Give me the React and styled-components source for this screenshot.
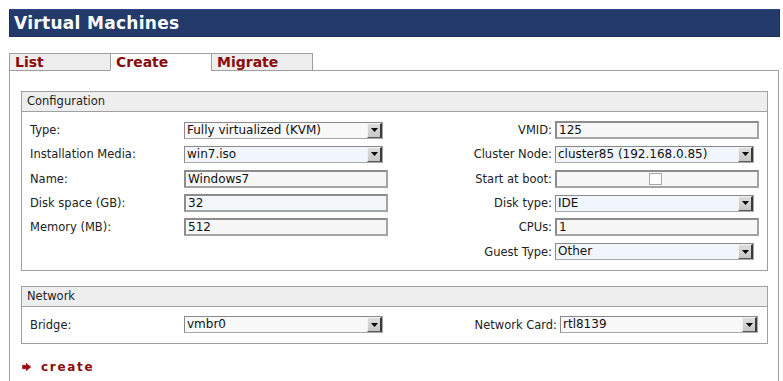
import React from 'react';
import styled, { createGlobalStyle } from 'styled-components';

const GlobalStyle = createGlobalStyle`
  html, body { margin: 0; padding: 0; background: #fff; }
  body { font-family: "DejaVu Sans", Verdana, sans-serif; color: #222; }
`;

const Page = styled.div`
  width: 771px;
  padding: 9px 0 0 9px;
`;

const TitleBar = styled.h1`
  margin: 0;
  height: 28px;
  box-sizing: border-box;
  background: #233a6b;
  border: 1px solid #1d2f5c;
  border-top-color: #2d4486;
  color: #fff;
  font: bold 17px/26px "DejaVu Sans", sans-serif;
  letter-spacing: 0.3px;
  padding-left: 4px;
`;

const TabStrip = styled.div`
  display: flex;
  margin-top: 16px;
  position: relative;
  z-index: 1;
`;

const Tab = styled.div`
  box-sizing: border-box;
  width: ${p => p.$w}px;
  height: 18px;
  padding-left: 5px;
  border-top: 1px solid #a0a0a0;
  border-left: 1px solid #a0a0a0;
  border-right: ${p => (p.$last ? '1px solid #a0a0a0' : 'none')};
  border-bottom: 1px solid ${p => (p.$active ? '#fff' : '#a0a0a0')};
  background: ${p => (p.$active ? '#fff' : '#eeeeee')};
  color: #8b0b0b;
  font: bold 14px/16px "DejaVu Sans", sans-serif;
  margin-bottom: -1px;
`;

const Panel = styled.div`
  width: 770px;
  box-sizing: border-box;
  border: 1px solid #a0a0a0;
  padding: 20px 10px 40px 11px;
`;

const Group = styled.section`
  border: 1px solid #a0a0a0;
  & + & {
    margin-top: 15px;
  }
`;

const GroupHead = styled.div`
  height: 19px;
  background: #eeeeee;
  border-bottom: 1px solid #a0a0a0;
  padding-left: 5px;
  font-size: 11.5px;
  line-height: 19px;
  color: #222;
`;

const FormGrid = styled.div`
  display: grid;
  grid-template-columns: 154px 204px 1fr ${p => p.$last}px;
  grid-auto-rows: 24.3px;
  align-items: center;
  padding: 6px 8px ${p => p.$bottom}px;
`;

const Label = styled.label`
  font-size: 11.5px;
  color: #222;
  white-space: nowrap;
  text-align: ${p => (p.$right ? 'right' : 'left')};
  padding-right: ${p => (p.$right ? '3px' : '0')};
`;

const Empty = styled.div``;

const TextBox = styled.input`
  box-sizing: border-box;
  width: 204px;
  height: 18px;
  margin: 0;
  padding: 0 2px;
  border: 2px solid #a4a4a4;
  border-top-color: #8c8c8c;
  border-left-color: #8c8c8c;
  background: ${p => (p.$tint ? '#f3f7fc' : '#f7f7f7')};
  font: 12px "DejaVu Sans", sans-serif;
  color: #111;
  outline: none;
`;

const CheckField = styled.div`
  box-sizing: border-box;
  width: 204px;
  height: 18px;
  border: 2px solid #a4a4a4;
  border-top-color: #8c8c8c;
  border-left-color: #8c8c8c;
  background: #f7f7f7;
  display: flex;
  align-items: center;
  justify-content: center;
`;

const Check = styled.input`
  appearance: none;
  margin: 0 4px 0 0;
  width: 13px;
  height: 12px;
  box-sizing: border-box;
  border: 1px solid #a8a8a8;
  background: #fff;
`;

const SelectBox = styled.div`
  box-sizing: border-box;
  width: ${p => p.$w}px;
  height: 17px;
  display: flex;
  border: 1px solid #a8a8a8;
  border-top-color: #8a8a8a;
  border-left-color: #8a8a8a;
  background: ${p => (p.$tint ? '#f1f6fc' : '#f8f8f8')};
`;

const SelectValue = styled.span`
  flex: 1;
  padding-left: 2px;
  font: 12px/15px "DejaVu Sans", sans-serif;
  color: #111;
  white-space: nowrap;
  overflow: hidden;
`;

const DropButton = styled.span`
  box-sizing: border-box;
  width: 15px;
  height: 100%;
  background: linear-gradient(#dedede, #c6c6c6);
  border-top: 1px solid #f2f2f2;
  border-left: 1px solid #f2f2f2;
  border-right: 2px solid #3a3a3a;
  border-bottom: 1px solid #5a5a5a;
  display: flex;
  align-items: center;
  justify-content: center;
`;

const Actions = styled.div`
  margin-top: 15px;
  padding-left: 1px;
  display: flex;
  align-items: center;
  gap: 10px;
`;

const CreateLink = styled.a`
  color: #8b0b0b;
  font: bold 12px/16px "DejaVu Sans", sans-serif;
  letter-spacing: 1.7px;
  text-decoration: none;
`;

const Select = ({ value, w = 199, tint }) => (
  <SelectBox $w={w} $tint={tint}>
    <SelectValue>{value}</SelectValue>
    <DropButton>
      <svg width="7" height="4" viewBox="0 0 7 4">
        <path d="M0 0H7L3.5 4Z" fill="#000" />
      </svg>
    </DropButton>
  </SelectBox>
);

const Arrow = () => (
  <svg width="9" height="8" viewBox="0 0 9 8">
    <path d="M0.5 2.3H4.3V0.3L8.8 4L4.3 7.7V5.7H0.5Z" fill="#9b0d0d" stroke="#9b0d0d" strokeWidth="0.6" strokeLinejoin="round" />
  </svg>
);

export default function App() {
  return (
    <>
      <GlobalStyle />
      <Page>
        <TitleBar>Virtual Machines</TitleBar>
        <TabStrip>
          <Tab $w={101}>List</Tab>
          <Tab $w={101} $active>Create</Tab>
          <Tab $w={102} $last>Migrate</Tab>
        </TabStrip>
        <Panel>
          <Group>
            <GroupHead>Configuration</GroupHead>
            <FormGrid $last={204} $bottom={6}>
              <Label>Type:</Label>
              <Select value="Fully virtualized (KVM)" />
              <Label $right>VMID:</Label>
              <TextBox readOnly value="125" />

              <Label>Installation Media:</Label>
              <Select value="win7.iso" tint />
              <Label $right>Cluster Node:</Label>
              <Select value="cluster85 (192.168.0.85)" tint />

              <Label>Name:</Label>
              <TextBox readOnly value="Windows7" />
              <Label $right>Start at boot:</Label>
              <CheckField>
                <Check type="checkbox" readOnly />
              </CheckField>

              <Label>Disk space (GB):</Label>
              <TextBox readOnly value="32" $tint />
              <Label $right>Disk type:</Label>
              <Select value="IDE" tint />

              <Label>Memory (MB):</Label>
              <TextBox readOnly value="512" />
              <Label $right>CPUs:</Label>
              <TextBox readOnly value="1" />

              <Empty />
              <Empty />
              <Label $right>Guest Type:</Label>
              <Select value="Other" tint />
            </FormGrid>
          </Group>
          <Group>
            <GroupHead>Network</GroupHead>
            <FormGrid $last={199} $bottom={6}>
              <Label>Bridge:</Label>
              <Select value="vmbr0" />
              <Label $right>Network Card:</Label>
              <Select value="rtl8139" w={198} />
            </FormGrid>
          </Group>
          <Actions>
            <Arrow />
            <CreateLink href="#">create</CreateLink>
          </Actions>
        </Panel>
      </Page>
    </>
  );
}
